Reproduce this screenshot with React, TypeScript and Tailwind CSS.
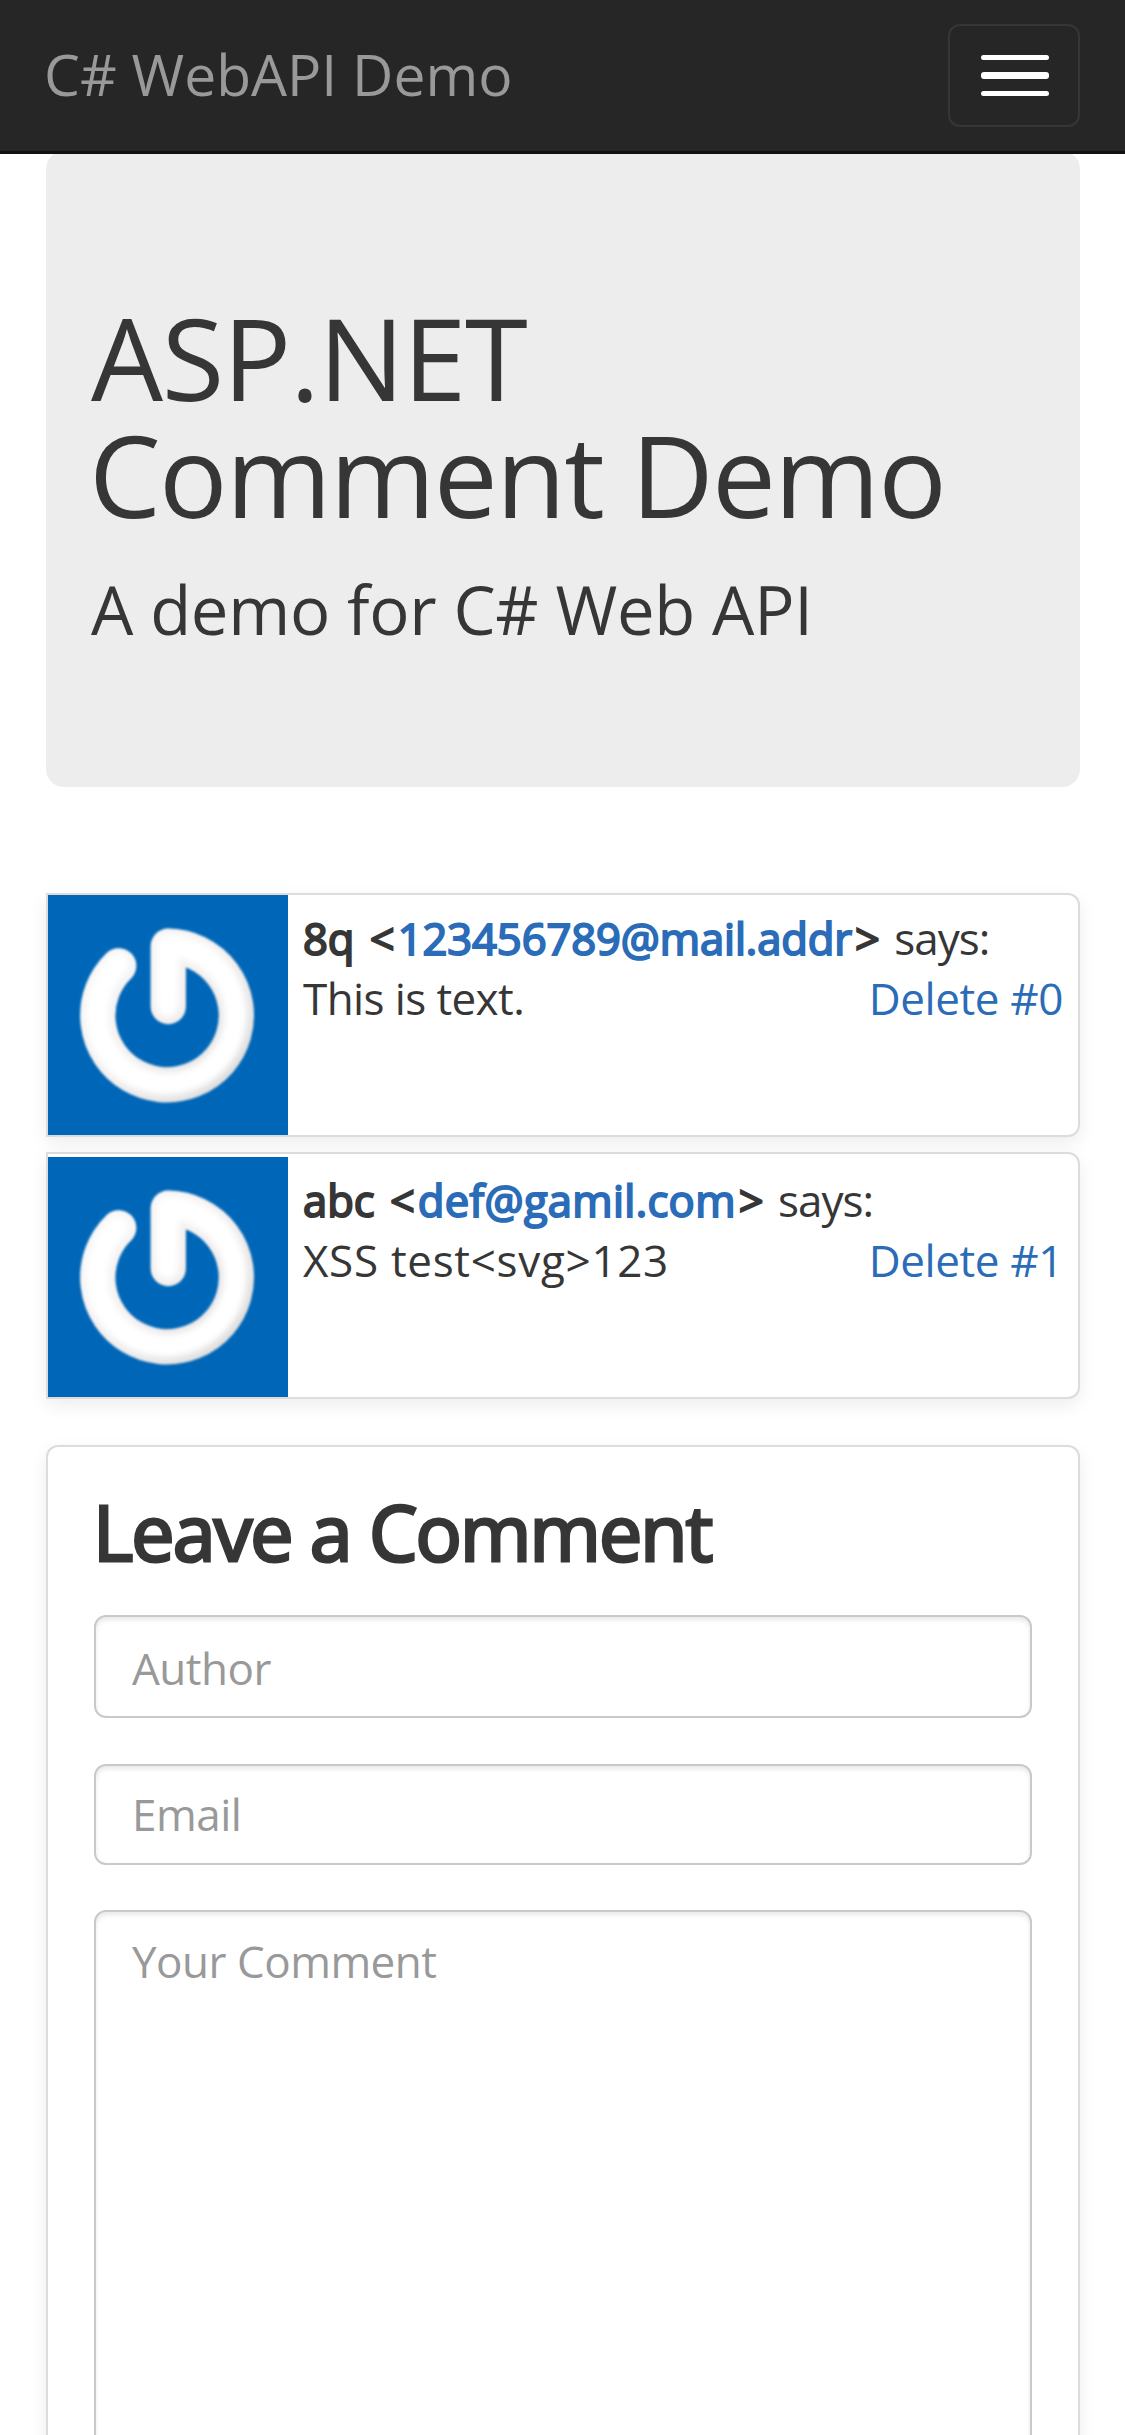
const RING = 'M120.3 111.6 V51.2 A69.3 69.3 0 1 1 70.8 70.8';

function Avatar({ id }: { id: string }) {
  return (
    <svg width="240" height="240" viewBox="0 0 240 240" className="block shrink-0" aria-hidden="true">
      <defs>
        <linearGradient id={`${id}-edge`} x1="0" y1="0" x2="1" y2="1">
          <stop offset="0" stopColor="#f7f7f8" />
          <stop offset="0.5" stopColor="#f3efee" />
          <stop offset="1" stopColor="#dcdcdc" />
        </linearGradient>
        <filter id={`${id}-soft`} x="-20%" y="-20%" width="140%" height="140%">
          <feGaussianBlur stdDeviation="3" />
        </filter>
        <filter id={`${id}-rim`} x="-20%" y="-20%" width="140%" height="140%">
          <feGaussianBlur stdDeviation="0.9" />
        </filter>
      </defs>
      <rect width="240" height="240" fill="#0067b8" />
      <g fill="none" strokeLinecap="round" strokeLinejoin="round">
        <path d={RING} stroke={`url(#${id}-edge)`} strokeWidth="35.2" filter={`url(#${id}-rim)`} />
        <path d={RING} stroke="#ffffff" strokeWidth="23" filter={`url(#${id}-soft)`} transform="translate(-1 -1)" />
      </g>
    </svg>
  );
}

type Comment = {
  id: number;
  author: string;
  email: string;
  emailSpacing: string;
  body: string;
  bodySpacing: string;
  cardClass: string;
};

const comments: Comment[] = [
  {
    id: 0,
    author: '8q',
    email: '123456789@mail.addr',
    emailSpacing: 'tracking-[-0.08px]',
    body: 'This is text.',
    bodySpacing: 'tracking-[-0.6px]',
    cardClass: 'h-[244px]',
  },
  {
    id: 1,
    author: 'abc',
    email: 'def@gamil.com',
    emailSpacing: 'tracking-[0.35px]',
    body: 'XSS test<svg>123',
    bodySpacing: 'tracking-[0.7px]',
    cardClass: 'mt-[15px] h-[247px] pt-[3px]',
  },
];

function CommentCard({ comment }: { comment: Comment }) {
  return (
    <article
      className={`flex rounded-r-[12px] border-2 border-[#dcdcdc] bg-white shadow-[0_6px_18px_rgba(0,0,0,0.075)] ${comment.cardClass}`}
    >
      <Avatar id={`avatar-${comment.id}`} />
      <div className="flex-1 pt-[14px] pr-[15px] pl-[15px] text-[44px] leading-[59px] whitespace-nowrap">
        <div>
          <b className="text-[43.5px] font-normal [word-spacing:4px] [-webkit-text-stroke:2px]">
            {comment.author} &lt;
            <a href="#" className={`ml-[3px] text-[#2b6cb8] ${comment.emailSpacing}`}>{comment.email}</a>
            <span className="ml-[3px]">&gt;</span>
          </b>
          <span className="tracking-[-1px] [word-spacing:4px]"> says:</span>
        </div>
        <div className="mt-px flex justify-between">
          <span className={comment.bodySpacing}>{comment.body}</span>
          <a href="#" className="tracking-[-0.4px] text-[#2b6cb8]">Delete #{comment.id}</a>
        </div>
      </div>
    </article>
  );
}

const fieldClass =
  'block w-full rounded-[12px] border-2 border-[#c9c9c9] bg-white px-[36px] text-[44px] tracking-[-0.5px] text-[#555] outline-none placeholder:text-[#999] placeholder:opacity-100 shadow-[inset_0_3px_5px_rgba(0,0,0,0.09)]';

export default function App() {
  return (
    <div className="h-[2435px] overflow-hidden bg-white font-['Open_Sans','Noto_Sans',sans-serif] text-[#363636]">
      <nav className="relative z-10 flex h-[154px] items-start justify-between border-b-[3px] border-[#111] bg-[#262626] pr-[45px] pl-[44px]">
        <a href="#" className="text-[57px] leading-[149px] text-[#999]">C# WebAPI Demo</a>
        <button
          type="button"
          aria-label="Toggle navigation"
          className="mt-[24px] flex h-[103px] w-[132px] flex-col items-center rounded-[12px] border-2 border-[#363636] pt-[29px] pl-[2px]"
        >
          <span className="h-[5px] w-[68px] rounded-[3px] bg-white" />
          <span className="mt-[12px] h-[7px] w-[68px] rounded-[3px] bg-white" />
          <span className="mt-[12px] h-[5px] w-[68px] rounded-[3px] bg-white" />
        </button>
      </nav>

      <main className="mx-[45px]">
        <header className="mt-[-3px] ml-px h-[636px] rounded-[18px] bg-[#ededed] pt-[147px] pl-[45px]">
          <h1 className="text-[114px] leading-[117px] font-normal whitespace-nowrap">
            <span className="block tracking-[-1.4px]">ASP.NET</span>
            <span className="-ml-[2px] block tracking-[-1.7px]">Comment Demo</span>
          </h1>
          <p className="mt-[30px] text-[67px] leading-[94px] tracking-[-0.3px]">A demo for C# Web API</p>
        </header>

        <section className="mt-[106px] ml-px">
          {comments.map((comment) => (
            <CommentCard key={comment.id} comment={comment} />
          ))}
        </section>

        <form className="mt-[46px] ml-px h-[1200px] rounded-[12px] border-2 border-[#dcdcdc] bg-white px-[46px] pt-[42px] shadow-[0_6px_18px_rgba(0,0,0,0.075)]">
          <h2 className="-ml-px text-[77px] leading-[85px] font-normal tracking-[-1.85px] [-webkit-text-stroke:3px]">
            Leave a Comment
          </h2>
          <input className={`mt-[41px] h-[103px] pt-[2px] ${fieldClass}`} placeholder="Author" />
          <input className={`mt-[46px] h-[101px] pb-[2px] ${fieldClass}`} placeholder="Email" />
          <textarea
            className={`mt-[45px] h-[900px] resize-none pt-[18px] leading-[63px] ${fieldClass}`}
            placeholder="Your Comment"
          />
        </form>
      </main>
    </div>
  );
}
